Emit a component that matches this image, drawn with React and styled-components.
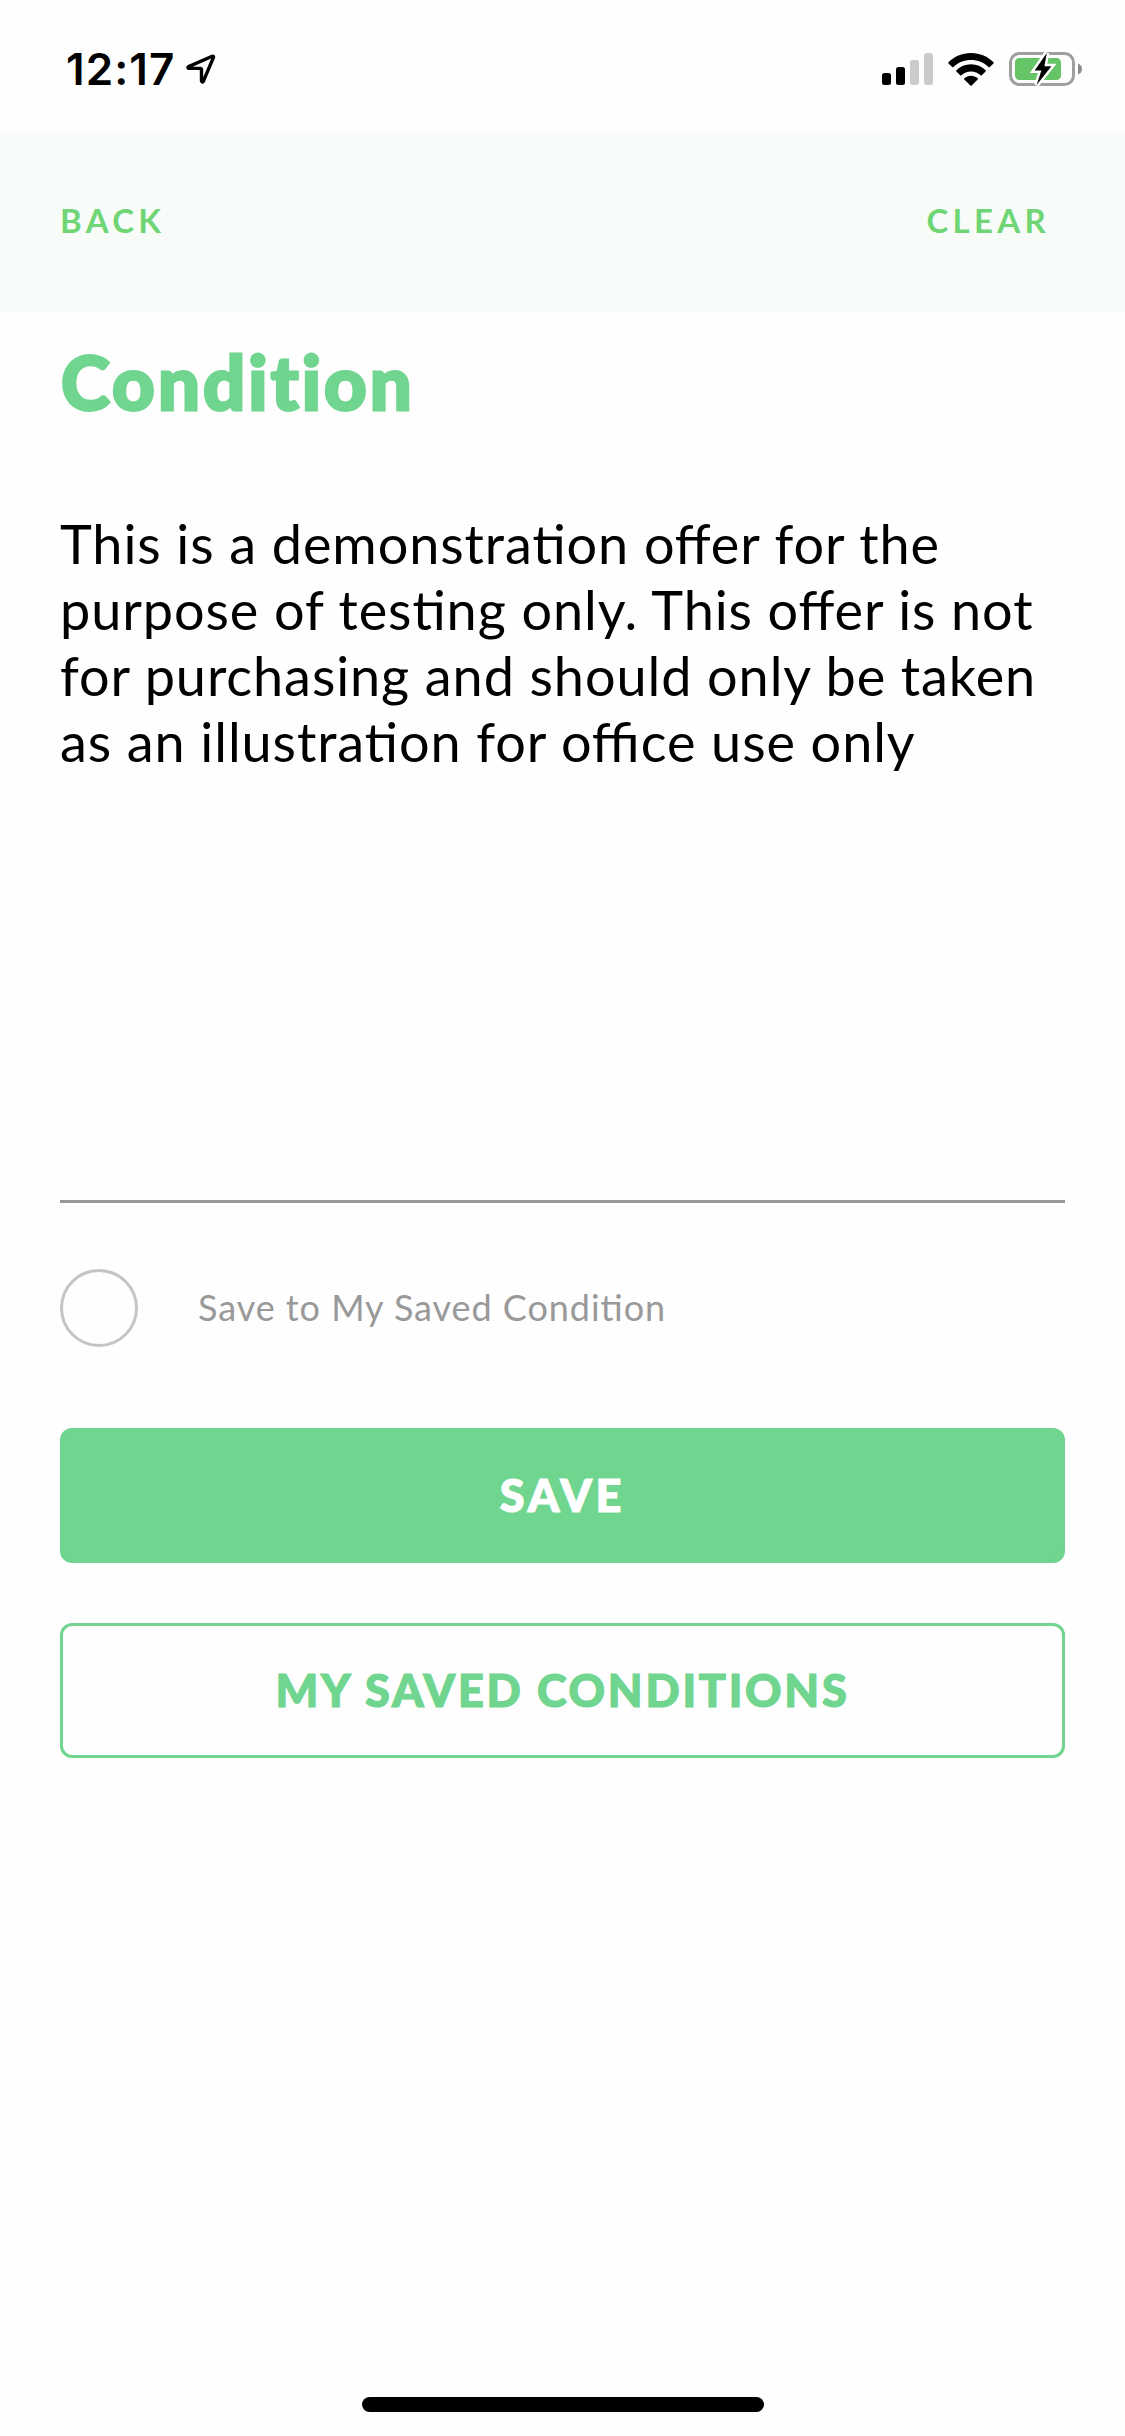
import { useState } from 'react'
import styled, { createGlobalStyle } from 'styled-components'

const SAMPLE =
  'This is a demonstration offer for the purpose of testing only. This offer is not for purchasing and should only be taken as an illustration for office use only'

export default function App() {
  const [saved, setSaved] = useState(false)
  const [text, setText] = useState(SAMPLE)

  return (
    <Screen>
      <GlobalStyle />
      <StatusBar>
        <Clock>
          <Time>12:17</Time>
          <LocationIcon />
        </Clock>
        <Indicators>
          <SignalIcon />
          <WifiIcon />
          <BatteryIcon />
        </Indicators>
      </StatusBar>
      <Header>
        <HeaderLink>BACK</HeaderLink>
        <HeaderLink onClick={() => setText('')}>CLEAR</HeaderLink>
      </Header>
      <Content>
        <Title>Condition</Title>
        <Note>{text}</Note>
        <SaveOption onClick={() => setSaved(!saved)}>
          <Radio $checked={saved} />
          <span>Save to My Saved Condition</span>
        </SaveOption>
        <Buttons>
          <Button $filled>SAVE</Button>
          <Button>MY SAVED CONDITIONS</Button>
        </Buttons>
      </Content>
      <HomeIndicator />
    </Screen>
  )
}

const LocationIcon = () => (
  <svg width='32' height='32' viewBox='0 0 32 32'>
    <path
      d='M3.6 13.6L27.2 3.3Q29 2.8 28.4 4.7L18.4 28.2Q17.2 29.9 16.5 28V16.3Q16.4 15.5 15.5 15.4H4Q2 14.6 3.6 13.6Z'
      fill='none'
      stroke='#000'
      strokeWidth='3.4'
      strokeLinejoin='round'
    />
  </svg>
)

const SignalIcon = () => (
  <svg width='51' height='32' viewBox='0 0 51 32'>
    <rect x='0' y='20' width='9' height='12' rx='2.5' />
    <rect x='14' y='14' width='9' height='18' rx='2.5' />
    <rect x='28' y='7' width='9' height='25' rx='2.5' fill='#cbcbcb' />
    <rect x='42' y='0' width='9' height='32' rx='2.5' fill='#cbcbcb' />
  </svg>
)

const WifiIcon = () => (
  <svg width='46' height='33' viewBox='0 0 46 33'>
    <path d='M23 0C32 0 40 3.600 45.500 9.200Q46 9.800 45.500 10.400L41.800 14.100Q41.200 14.600 40.600 14.100C36 9.600 29.800 7 23 7S10 9.600 5.400 14.100Q4.800 14.600 4.200 14.100L.5 10.400Q0 9.800 .5 9.200C6 3.600 14 0 23 0Z' />
    <path d='M23 11.300C28.700 11.300 33.800 13.500 37.600 17.200Q38.200 17.800 37.600 18.400L33.800 22.200Q33.200 22.700 32.600 22.200C30 19.800 26.700 18.400 23 18.400S16 19.800 13.400 22.200Q12.800 22.700 12.200 22.200L8.400 18.400Q7.800 17.800 8.400 17.200C12.200 13.500 17.300 11.300 23 11.300Z' />
    <path d='M23 22.800C25.500 22.800 27.900 23.700 29.700 25.200Q30.300 25.800 29.700 26.400L23.600 32.400Q23 32.900 22.400 32.400L16.300 26.400Q15.700 25.800 16.300 25.200C18.100 23.700 20.500 22.800 23 22.800Z' />
  </svg>
)

const BatteryIcon = () => (
  <svg width='74' height='36' viewBox='0 0 74 36'>
    <rect x='1.500' y='2.500' width='63' height='31' rx='9' fill='none' stroke='#9f9f9f' strokeWidth='3' />
    <path d='M69 12.500V23.500Q73 22 73 18T69 12.500Z' fill='#8d8d8d' />
    <rect x='6' y='7' width='46' height='22' rx='4.500' fill='#65c466' />
    <path
      d='M37.800 2L25.600 19.600H32.400L27.600 34L42.400 15.200H35.400Z'
      stroke='#fff'
      strokeWidth='5'
      paintOrder='stroke'
    />
  </svg>
)

const GlobalStyle = createGlobalStyle`
  * {
    box-sizing: border-box;
  }

  body {
    margin: 0;
    background: #fefefe;
    font-family: Lato, sans-serif;
  }
`

const Screen = styled.div`
  display: flex;
  flex-direction: column;
  width: 1125px;
  height: 2436px;
  background: #fefefe;
`

const StatusBar = styled.div`
  display: flex;
  justify-content: space-between;
  align-items: center;
  height: 132px;
  padding: 6px 42px 0 66px;

  svg {
    display: block;
  }
`

const Clock = styled.div`
  display: flex;
  align-items: center;
  gap: 7px;
`

const Time = styled.span`
  width: 112px;
  font-family: Inter, sans-serif;
  font-size: 44px;
  font-weight: 600;
  line-height: 52px;
  letter-spacing: 1.1px;
  white-space: nowrap;
`

const Indicators = styled.div`
  display: flex;
  align-items: center;
  gap: 15px;
`

const Header = styled.header`
  display: flex;
  justify-content: space-between;
  align-items: flex-start;
  height: 180px;
  padding: 68px 75px 0 60px;
  background: #f7fcf9;
`

const HeaderLink = styled.button`
  padding: 0;
  border: 0;
  background: none;
  color: #70d574;
  font: 700 33px/40px Lato, sans-serif;
  letter-spacing: 4.3px;
`

const Content = styled.main`
  flex: 1;
  padding: 25px 60px 0;
`

/* the stroke thickens the bold face to a black weight */
const Title = styled.h1`
  margin: 0;
  padding-left: 1px;
  color: #70d58f;
  font-size: 74px;
  font-weight: 900;
  line-height: 90px;
  letter-spacing: 3.1px;
  -webkit-text-stroke: 2.8px #70d58f;
  paint-order: stroke fill;
`

const Note = styled.p`
  height: 693px;
  margin: 83px 0 0;
  padding-top: 1px;
  border-bottom: 3px solid #979998;
  color: #000;
  font-size: 54px;
  line-height: 66px;
  letter-spacing: 0.92px;
  font-feature-settings: 'liga' 1;
`

const SaveOption = styled.div`
  display: flex;
  align-items: center;
  gap: 60px;
  margin-top: 66px;
  color: #999;
  font-size: 36px;
  line-height: 44px;
  letter-spacing: 0.95px;
  font-feature-settings: 'liga' 1;

  span:last-child {
    padding-bottom: 3px;
  }
`

const Radio = styled.span`
  width: 78px;
  height: 78px;
  border: 3px solid #c4c4c4;
  border-radius: 50%;
  background: ${props => (props.$checked ? '#70d58f' : 'transparent')};
`

const Buttons = styled.div`
  display: flex;
  flex-direction: column;
  gap: 60px;
  margin-top: 81px;
`

const Button = styled.button`
  height: 135px;
  padding: 0 0 2px;
  border: 3px solid #70d58f;
  border-radius: 12px;
  background: ${props => (props.$filled ? '#70d58f' : 'transparent')};
  color: ${props => (props.$filled ? '#fff' : '#70d58f')};
  font: 900 45px/54px Lato, sans-serif;
  letter-spacing: ${props => (props.$filled ? '3.7px' : '2.75px')};
  -webkit-text-stroke: 1.2px currentColor;
`

const HomeIndicator = styled.div`
  width: 402px;
  height: 15px;
  margin: 0 auto 24px;
  border-radius: 8px;
  background: #000;
`
